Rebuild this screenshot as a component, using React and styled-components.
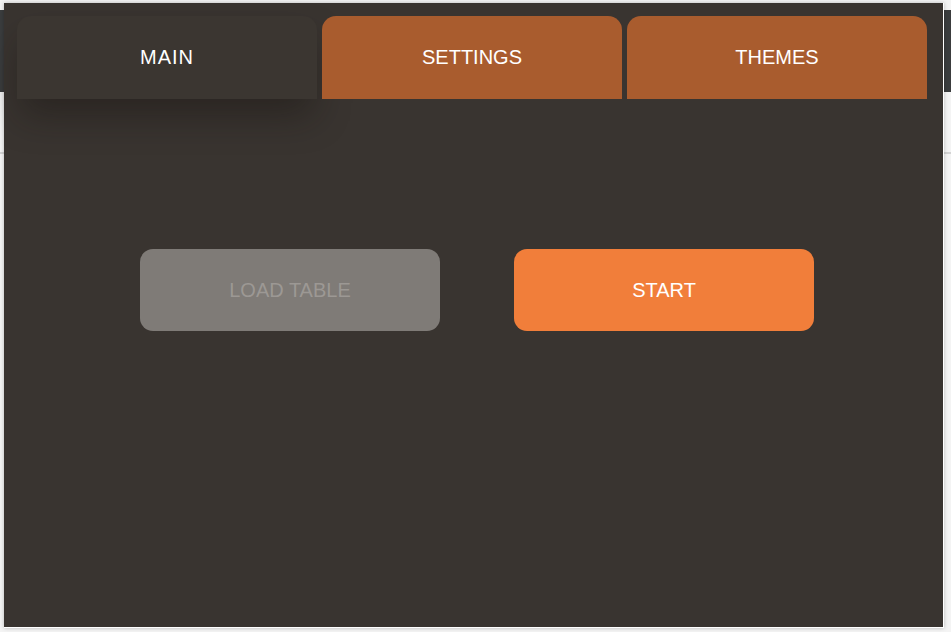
import React, { useState } from 'react';
import styled, { createGlobalStyle } from 'styled-components';

const GlobalStyle = createGlobalStyle`
  html, body {
    margin: 0;
    padding: 0;
    background: #f1f1f1;
    font-family: "Liberation Sans", Arial, sans-serif;
  }
`;

const tabs = ['MAIN', 'SETTINGS', 'THEMES'];

const App = () => {
  const [active, setActive] = useState(0);

  return (
    <Page>
      <GlobalStyle />
      <HostHeader />
      <HostRule />
      <Popup>
        <TabBar>
          {tabs.map((t, i) => (
            <Tab key={t} active={i === active} onClick={() => setActive(i)}>
              {t}
            </Tab>
          ))}
        </TabBar>
        <Actions>
          <ActionButton disabled>LOAD TABLE</ActionButton>
          <ActionButton primary>START</ActionButton>
        </Actions>
      </Popup>
    </Page>
  );
};

const Page = styled.div`
  position: relative;
  width: 951px;
  height: 632px;
  overflow: hidden;
  background: #f4f4f4;
`;

const HostHeader = styled.div`
  margin-top: 10px;
  height: 82px;
  background: #3b3d3e;
`;

const HostRule = styled.div`
  margin-top: 60px;
  height: 2px;
  background: #d4d4d4;
`;

const Popup = styled.div`
  position: absolute;
  left: 4px;
  top: 3px;
  width: 940px;
  height: 625px;
  box-sizing: border-box;
  background: #393430;
  border-right: 1px solid #ffffff;
  border-bottom: 1px solid #ffffff;
  box-shadow: 0 0 4px rgba(0, 0, 0, 0.25);
  padding: 13px 17px 0 13px;
  display: flex;
  flex-direction: column;
`;

const TabBar = styled.div`
  display: grid;
  grid-template-columns: repeat(3, 300px);
  column-gap: 5px;
`;

const Tab = styled.div`
  height: 83px;
  display: flex;
  align-items: center;
  justify-content: center;
  border-radius: 14px 14px 0 0;
  font-size: 20px;
  color: #ffffff;
  cursor: pointer;
  background: ${(p) => (p.active ? '#3b3631' : '#a95c2e')};
  letter-spacing: ${(p) => (p.active ? '1px' : '0')};
  box-shadow: ${(p) =>
    p.active ? '0 20px 36px -4px rgba(20, 16, 12, 0.4)' : 'none'};
  position: relative;
  z-index: ${(p) => (p.active ? 1 : 2)};
`;

const Actions = styled.div`
  margin-top: 150px;
  display: flex;
  justify-content: center;
  gap: 74px;
  padding-left: 11px;
`;

const ActionButton = styled.button`
  width: 300px;
  height: 82px;
  border: none;
  border-radius: 13px;
  font-family: "Liberation Sans", Arial, sans-serif;
  font-size: 20px;
  background: ${(p) => (p.primary ? '#f17e3a' : '#7f7b77')};
  color: ${(p) => (p.primary ? '#ffffff' : '#9c9894')};
  cursor: ${(p) => (p.disabled ? 'default' : 'pointer')};
`;

export default App;
